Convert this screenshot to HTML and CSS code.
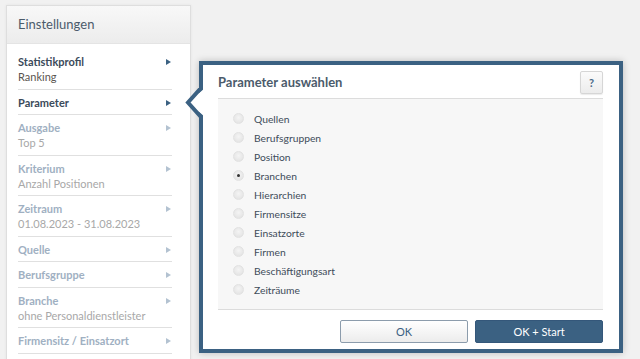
FILE: index.html
```html
<!DOCTYPE html>
<html lang="de">
<head>
<meta charset="utf-8">
<title>Einstellungen</title>
<link rel="stylesheet" href="styles.css">
</head>
<body>
<div class="page">
  <aside class="sidebar">
    <div class="sidebar-head">Einstellungen</div>
    <ul class="menu">
      <li class="item active"><div class="txt"><div class="ttl">Statistikprofil</div><div class="sub">Ranking</div></div><span class="caret"></span></li>
      <li class="item active"><div class="txt"><div class="ttl">Parameter</div></div><span class="caret"></span></li>
      <li class="item"><div class="txt"><div class="ttl">Ausgabe</div><div class="sub">Top 5</div></div><span class="caret"></span></li>
      <li class="item"><div class="txt"><div class="ttl">Kriterium</div><div class="sub">Anzahl Positionen</div></div><span class="caret"></span></li>
      <li class="item"><div class="txt"><div class="ttl">Zeitraum</div><div class="sub">01.08.2023 - 31.08.2023</div></div><span class="caret"></span></li>
      <li class="item"><div class="txt"><div class="ttl">Quelle</div></div><span class="caret"></span></li>
      <li class="item"><div class="txt"><div class="ttl">Berufsgruppe</div></div><span class="caret"></span></li>
      <li class="item"><div class="txt"><div class="ttl">Branche</div><div class="sub">ohne Personaldienstleister</div></div><span class="caret"></span></li>
      <li class="item"><div class="txt"><div class="ttl">Firmensitz / Einsatzort</div></div><span class="caret"></span></li>
    </ul>
  </aside>

  <section class="dialog">
    <svg class="pointer" width="24" height="30" viewBox="0 0 24 30">
      <polygon points="22,0 5,14.5 22,29" fill="#fff"/>
      <polyline points="18,0 5,14.5 18,29" fill="none" stroke="#3b6182" stroke-width="4" stroke-linejoin="miter"/>
    </svg>
    <header class="dlg-head">
      <h2 class="dlg-title">Parameter auswählen</h2>
      <button class="help">?</button>
    </header>
    <div class="dlg-body">
      <label class="opt"><span class="radio"></span>Quellen</label>
      <label class="opt"><span class="radio"></span>Berufsgruppen</label>
      <label class="opt"><span class="radio"></span>Position</label>
      <label class="opt"><span class="radio on"></span>Branchen</label>
      <label class="opt"><span class="radio"></span>Hierarchien</label>
      <label class="opt"><span class="radio"></span>Firmensitze</label>
      <label class="opt"><span class="radio"></span>Einsatzorte</label>
      <label class="opt"><span class="radio"></span>Firmen</label>
      <label class="opt"><span class="radio"></span>Beschäftigungsart</label>
      <label class="opt"><span class="radio"></span>Zeiträume</label>
    </div>
    <footer class="dlg-foot">
      <button class="btn btn-light">OK</button>
      <button class="btn btn-primary">OK + Start</button>
    </footer>
  </section>
</div>
</body>
</html>
```

FILE: styles.css
```css
html, body {
  margin: 0;
  padding: 0;
  height: 100%;
  overflow: hidden;
}
body {
  background: #f1f1f1;
  font-family: Lato, "Open Sans", "Liberation Sans", sans-serif;
  color: #3e4c5a;
}
.page {
  display: flex;
  align-items: flex-start;
  padding: 5px 0 0 6px;
}

/* Sidebar */
.sidebar {
  width: 183px;
  height: 400px;
  flex: none;
  background: #fff;
  border: 1px solid #dedede;
  box-shadow: 0 0 3px rgba(0,0,0,0.06);
}
.sidebar-head {
  height: 37px;
  line-height: 37px;
  padding-left: 11px;
  font-size: 13px;
  color: #4b5b6b;
  background: linear-gradient(#f8f8f8, #ececec);
  border-bottom: 1px solid #e4e4e4;
}
.menu {
  list-style: none;
  margin: 0;
  padding: 5px 18px 0 11px;
}
.item {
  display: flex;
  align-items: flex-start;
  justify-content: space-between;
  padding: 5px 0 4.5px;
  border-bottom: 1px solid #e0e0e0;
  font-size: 11px;
  line-height: 15px;
}
.ttl {
  font-weight: bold;
  color: #9fb0c2;
}
.sub {
  color: #a8a8a8;
}
.item.active .ttl { color: #3b4a5a; }
.item.active .sub { color: #5a5550; }
.caret {
  width: 0;
  height: 0;
  margin: 5px 1px 0 0;
  border-top: 3.5px solid transparent;
  border-bottom: 3.5px solid transparent;
  border-left: 5px solid #b3c2d1;
}
.item.active .caret { border-left-color: #3b6182; }

/* Dialog */
.dialog {
  position: relative;
  flex: none;
  margin: 56px 0 0 8px;
  width: 385px;
  height: 284px;
  padding: 0 16px 0 15px;
  background: #fff;
  border: 4px solid #3b6182;
  box-shadow: 0 0 7px rgba(0,0,0,0.22);
  display: flex;
  flex-direction: column;
}
.pointer {
  position: absolute;
  left: -20px;
  top: 23px;
}
.dlg-head {
  height: 33px;
  display: flex;
  align-items: center;
  justify-content: space-between;
  border-bottom: 1px solid #dcdcdc;
}
.dlg-title {
  margin: 0;
  font-size: 13px;
  font-weight: bold;
  color: #4b5b6b;
}
.help {
  width: 23px;
  height: 23px;
  padding: 0;
  margin-top: 1px;
  border: 1px solid #d6d6d6;
  border-radius: 2px;
  background: linear-gradient(#fbfbfb, #ececec);
  box-shadow: 0 1px 1px rgba(0,0,0,0.08);
  font-family: Lato, "Liberation Sans", sans-serif;
  font-size: 11px;
  font-weight: bold;
  color: #4a6a88;
}
.dlg-body {
  height: 190px;
  padding: 10px 15px;
  background: #f7f7f7;
  border-bottom: 1px solid #dcdcdc;
}
.opt {
  display: flex;
  align-items: center;
  height: 19px;
  font-size: 10.3px;
  color: #3e4c5a;
}
.radio {
  width: 9px;
  height: 9px;
  margin-right: 10px;
  border-radius: 50%;
  border: 1px solid #e2e2e2;
  background: radial-gradient(circle at 50% 40%, #f4f4f4, #e0e0e0);
  display: flex;
  align-items: center;
  justify-content: center;
}
.radio.on::after {
  content: "";
  width: 3px;
  height: 3px;
  border-radius: 50%;
  background: #333;
}
.dlg-foot {
  flex: 1;
  display: flex;
  justify-content: flex-end;
  align-items: flex-start;
  gap: 7px;
  padding-top: 10px;
}
.btn {
  width: 128px;
  height: 23px;
  padding: 0;
  border-radius: 2px;
  font-family: Lato, "Liberation Sans", sans-serif;
  font-size: 11px;
}
.btn-light {
  border: 1px solid #8c9cac;
  background: linear-gradient(#ffffff, #ececec);
  color: #3b6182;
}
.btn-primary {
  border: 1px solid #34577a;
  background: #3b6182;
  color: #fff;
}
```
